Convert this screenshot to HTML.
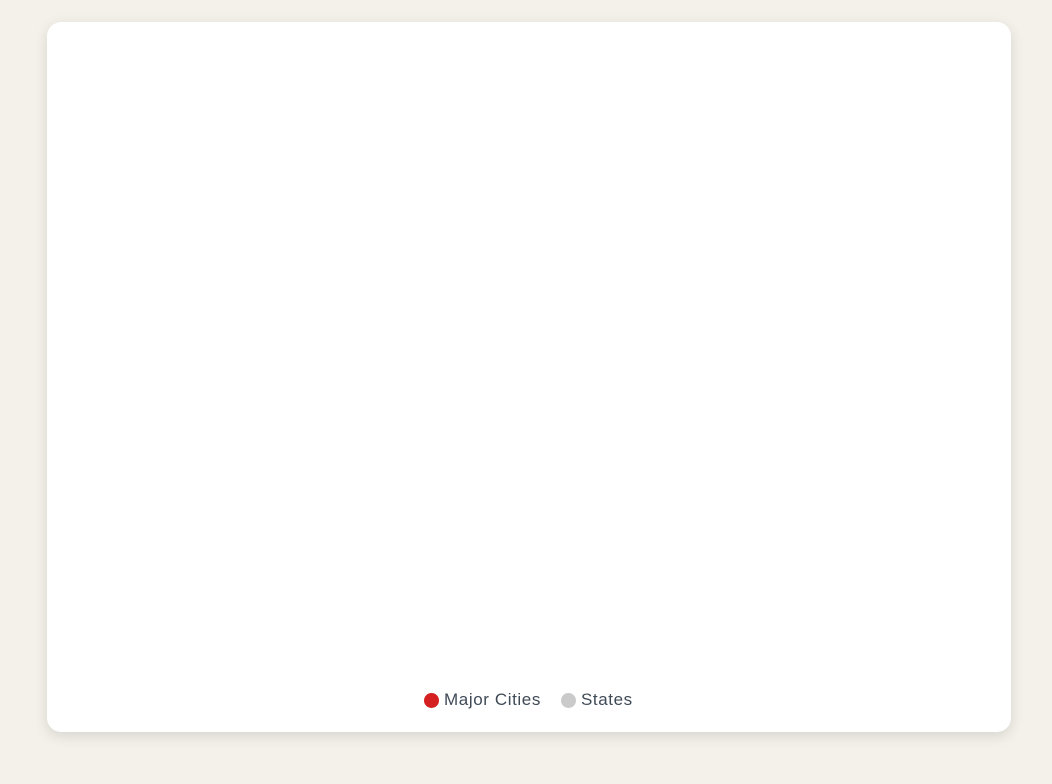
<!DOCTYPE html>
<html><head><style>
html,body{margin:0;padding:0;width:1052px;height:784px;background:#f4f1ea;overflow:hidden}
.card{position:absolute;left:47px;top:22px;width:964px;height:710px;background:#fff;border-radius:14px;box-shadow:0 4px 14px rgba(0,0,0,0.12)}
.legend{position:absolute;top:690px;left:424px;font-family:"Liberation Sans",sans-serif;font-size:17px;letter-spacing:0.6px;color:#3f4a57;display:flex;align-items:center;white-space:nowrap}
.dot{display:inline-block;width:15px;height:15px;border-radius:50%;margin-right:5px}
.item{display:flex;align-items:center}
</style></head><body>
<div class="card"></div>
<div class="legend">
<div class="item"><span class="dot" style="background:#d42020"></span>Major Cities</div>
<div class="item" style="margin-left:20px"><span class="dot" style="background:#cacaca"></span>States</div>
</div>
</body></html>
